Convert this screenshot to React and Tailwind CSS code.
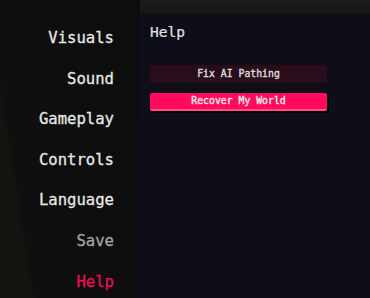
export default function App() {
  const items = [
    { label: "Visuals", cls: "text-[#e6e6e6]" },
    { label: "Sound", cls: "text-[#e6e6e6]" },
    { label: "Gameplay", cls: "text-[#e6e6e6]" },
    { label: "Controls", cls: "text-[#e6e6e6]" },
    { label: "Language", cls: "text-[#e6e6e6]" },
    { label: "Save", cls: "text-[#a3a3a3]" },
    { label: "Help", cls: "text-[#ea0f52]" },
  ];
  return (
    <div
      className="flex w-[370px] h-[298px] overflow-hidden"
      style={{ fontFamily: '"DejaVu Sans Mono", "Liberation Mono", monospace' }}
    >
      <div className="w-[140px] h-full bg-[linear-gradient(81deg,#11140f_0%,#12140f_16%,#0e0f0e_21%,#0d0d0d_100%)] flex flex-col items-end pr-[26px] pt-[28px] gap-[19px]">
        {items.map((it) => (
          <div
            key={it.label}
            className={`text-[15.6px] leading-[21.6px] font-normal [-webkit-text-stroke:0.3px_currentColor] ${it.cls}`}
          >
            {it.label}
          </div>
        ))}
      </div>
      <div className="flex-1 h-full flex flex-col bg-[#0d0e17]">
        <div className="h-[14px] bg-[linear-gradient(#1d1d1d,#151515)]" />
        <div className="pl-[10px] pr-[43px]">
          <div className="mt-[8px] text-[14.5px] leading-[20px] text-[#e2e2e2] [-webkit-text-stroke:0.2px_currentColor]">Help</div>
          <div className="mt-[23px] h-[18px] rounded-[2px] bg-[#2a0c1a] flex items-center justify-center text-[9.8px] font-normal [-webkit-text-stroke:0.4px_currentColor] text-[#d8d8d8]">
            Fix AI Pathing
          </div>
          <div className="mt-[10px] h-[18px] rounded-[2px] bg-[#ff0a5c] border-b-[2px] border-[#ff4d86] shadow-[2px_2px_0_#000] flex items-center justify-center text-[9.8px] font-normal [-webkit-text-stroke:0.4px_currentColor] text-[#e6e6e6]">
            Recover My World
          </div>
        </div>
      </div>
    </div>
  );
}
